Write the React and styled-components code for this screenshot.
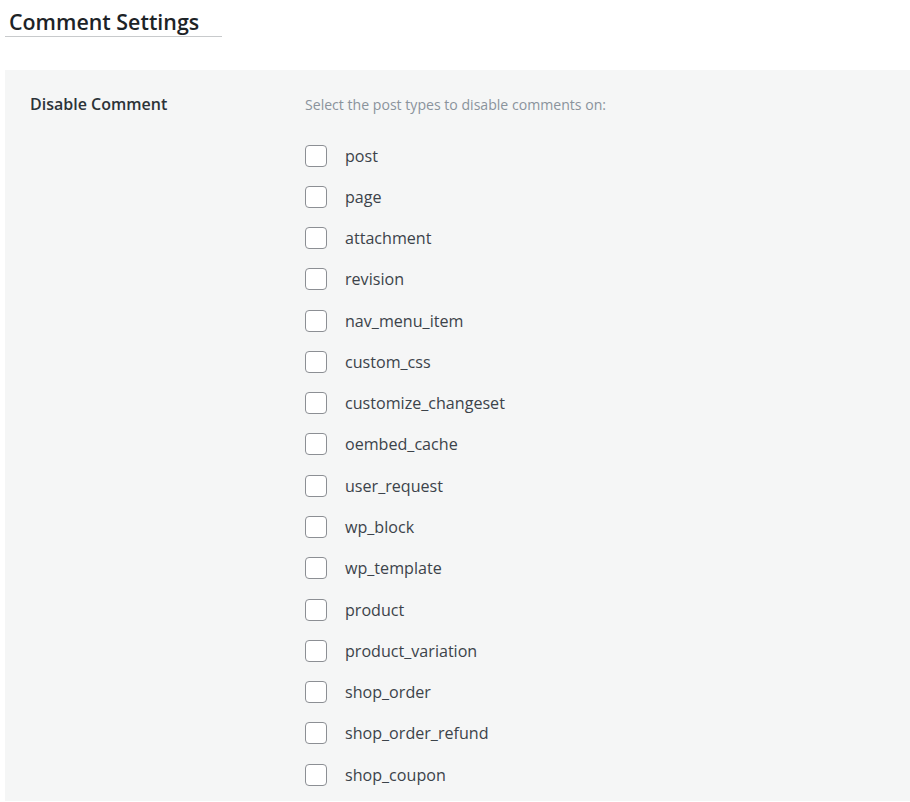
import React from "react";
import styled, { createGlobalStyle } from "styled-components";

const Global = createGlobalStyle`
  html, body { margin: 0; padding: 0; background: #fff; }
  body { font-family: "Open Sans", "Noto Sans", sans-serif; color: #1d2327; }
`;

const Page = styled.div`
  padding: 0 0 0 5px;
`;

const Title = styled.h2`
  display: inline-block;
  margin: 0;
  padding: 8px 4px 1px 4px;
  font-size: 21.4px;
  font-weight: 600;
  line-height: 27px;
  color: #1d2327;
  border-bottom: 1px solid #c8cacc;
  width: 209px;
`;

const Panel = styled.section`
  margin-top: 33px;
  background: #f5f6f6;
  display: grid;
  grid-template-columns: 275px 1fr;
  padding: 22px 25px 5px 25px;
  min-height: 731px;
  box-sizing: border-box;
`;

const FieldLabel = styled.div`
  font-size: 16px;
  font-weight: 600;
  color: #2c3338;
  line-height: 24px;
`;

const Field = styled.div`
  display: flex;
  flex-direction: column;
`;

const Desc = styled.p`
  margin: 3px 0 20px 0;
  font-size: 14.1px;
  line-height: 20px;
  color: #8a939c;
`;

const Row = styled.label`
  display: flex;
  align-items: center;
  height: 41.27px;
  gap: 18px;
  font-size: 16.1px;
  color: #3c434a;
`;

const Box = styled.span`
  width: 22px;
  height: 22px;
  box-sizing: border-box;
  border: 1px solid #8c8f94;
  border-radius: 4px;
  background: #fff;
  flex: none;
`;

const types = [
  "post", "page", "attachment", "revision", "nav_menu_item", "custom_css",
  "customize_changeset", "oembed_cache", "user_request", "wp_block",
  "wp_template", "product", "product_variation", "shop_order",
  "shop_order_refund", "shop_coupon",
];

export default function App() {
  return (
    <Page>
      <Global />
      <Title>Comment Settings</Title>
      <Panel>
        <FieldLabel>Disable Comment</FieldLabel>
        <Field>
          <Desc>Select the post types to disable comments on:</Desc>
          {types.map((t) => (
            <Row key={t}>
              <Box />
              <span>{t}</span>
            </Row>
          ))}
        </Field>
      </Panel>
    </Page>
  );
}
